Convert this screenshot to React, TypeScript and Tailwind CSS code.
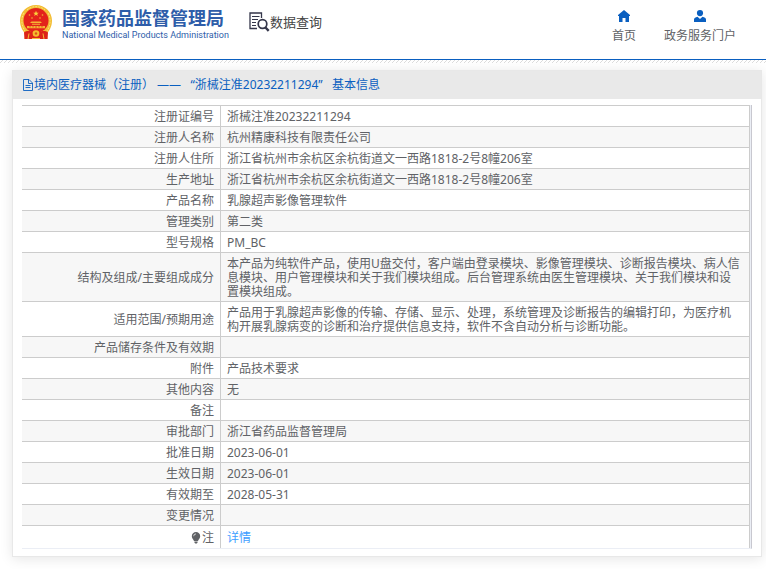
import { FC, ReactNode } from "react";

interface DetailRow {
  label: string;
  value: string;
}

const rows: DetailRow[] = [
  { label: "注册证编号", value: "浙械注准20232211294" },
  { label: "注册人名称", value: "杭州精康科技有限责任公司" },
  { label: "注册人住所", value: "浙江省杭州市余杭区余杭街道文一西路1818-2号8幢206室" },
  { label: "生产地址", value: "浙江省杭州市余杭区余杭街道文一西路1818-2号8幢206室" },
  { label: "产品名称", value: "乳腺超声影像管理软件" },
  { label: "管理类别", value: "第二类" },
  { label: "型号规格", value: "PM_BC" },
  {
    label: "结构及组成/主要组成成分",
    value:
      "本产品为纯软件产品，使用U盘交付，客户端由登录模块、影像管理模块、诊断报告模块、病人信息模块、用户管理模块和关于我们模块组成。后台管理系统由医生管理模块、关于我们模块和设置模块组成。",
  },
  {
    label: "适用范围/预期用途",
    value:
      "产品用于乳腺超声影像的传输、存储、显示、处理，系统管理及诊断报告的编辑打印，为医疗机构开展乳腺病变的诊断和治疗提供信息支持，软件不含自动分析与诊断功能。",
  },
  { label: "产品储存条件及有效期", value: "" },
  { label: "附件", value: "产品技术要求" },
  { label: "其他内容", value: "无" },
  { label: "备注", value: "" },
  { label: "审批部门", value: "浙江省药品监督管理局" },
  { label: "批准日期", value: "2023-06-01" },
  { label: "生效日期", value: "2023-06-01" },
  { label: "有效期至", value: "2028-05-31" },
  { label: "变更情况", value: "" },
];

export default function App() {
  return (
    <div
      lang="zh-CN"
      className="min-h-screen bg-white pb-3 font-['Noto_Sans','Noto_Sans_CJK_SC',sans-serif] text-xs text-[#606266]"
    >
      <SiteHeader />
      <main className="mt-[7px] mr-1 ml-3 border border-[#e8e8e8] bg-white shadow-[0_2px_12px_rgba(0,0,0,0.1)]">
        <h1 className="flex h-7 items-center bg-[#e9e9e9] pl-[9px] text-[#0a5fc0]">
          <DocIcon />
          <span className="whitespace-pre">
            境内医疗器械（注册） ——&nbsp;&nbsp; “浙械注准20232211294”&nbsp;&nbsp; 基本信息
          </span>
        </h1>
        <div className="px-[9px] pt-1.5 pb-[7px]">
          <DetailTable />
        </div>
      </main>
    </div>
  );
}

const SiteHeader = () => {
  return (
    <header>
      <div className="flex h-[59px] items-start justify-between pr-[30px] pl-5">
        <div className="flex items-start gap-5">
          <a href="#" className="flex items-start gap-[10px] pt-[5px] text-[#2e5da9]">
            <Emblem />
            <span className="flex flex-col pt-[3px]">
              <span className="text-lg leading-5 font-bold">国家药品监督管理局</span>
              <span className="font-['Roboto',sans-serif] text-[9px] leading-[14px]">
                National Medical Products Administration
              </span>
            </span>
          </a>
          <a
            href="#"
            className="flex items-center pt-3 text-[13px] leading-5 text-[#444]"
          >
            <SearchDocIcon />
            数据查询
          </a>
        </div>
        <nav className="flex gap-7 pt-2.5">
          <NavLink label="首页">
            <path d="M6 0 0 5v1h1v6h3.5V8h3v4H11V6h1V5z" />
          </NavLink>
          <NavLink label="政务服务门户">
            <circle cx="6" cy="3.1" r="3.1" />
            <path d="M0 12V9.6C0 8 1.5 7.2 3.5 6.8L6 9l2.500-2.200C10.500 7.200 12 8 12 9.600V12z" />
          </NavLink>
        </nav>
      </div>
      <div className="h-px bg-[#0a5fc0]" />
      <Hatching />
    </header>
  );
};

const NavLink: FC<{ label: string; children: ReactNode }> = ({ label, children }) => {
  return (
    <a href="#" className="flex flex-col items-center gap-[5px]">
      <svg width="12" height="12" viewBox="0 0 12 12" className="fill-[#0a5fc0]">
        {children}
      </svg>
      <span className="leading-[18px]">{label}</span>
    </a>
  );
};

const Hatching = () => (
  <svg width="100%" height="3" className="block">
    <pattern id="hatch" width="4" height="4" patternUnits="userSpaceOnUse">
      <path d="M2 0h1v1H2zM1 1h1v1H1zM0 2h1v1H0z" fill="#dcdcdc" />
    </pattern>
    <rect width="100%" height="3" fill="url(#hatch)" />
  </svg>
);

const DetailTable = () => {
  return (
    <div className="border-r border-b border-r-[#c8c8d0] border-b-[#ebeef5] bg-[#ebeef5] pr-px">
      <table className="w-full border-separate border-spacing-0 bg-white leading-[14px]">
        <tbody>
          {rows.map((row) => (
            <tr key={row.label} className="even:bg-[#f7f7f7]">
              <th
                scope="row"
                className="w-[199px] border-t border-r border-[#ccc] px-1.5 pt-1 pb-0.5 text-right font-normal"
              >
                {row.label}
              </th>
              <td className="border-t border-r border-[#ccc] pt-1 pr-2 pb-0.5 pl-1.5 text-left">
                {row.value}
              </td>
            </tr>
          ))}
          <tr>
            <th
              scope="row"
              className="w-[199px] border-t border-r border-[#ccc] px-1.5 pt-[5px] pb-[3px] text-right font-normal"
            >
              <span className="flex items-center justify-end gap-px">
                <BulbIcon />注
              </span>
            </th>
            <td className="border-t border-r border-[#ccc] pt-[5px] pr-2 pb-[3px] pl-1.5 text-left">
              <a href="#" className="text-[#409eff]">
                详情
              </a>
            </td>
          </tr>
        </tbody>
      </table>
    </div>
  );
};

const DocIcon = () => (
  <svg width="12" height="12" viewBox="0 0 12 12" fill="none" stroke="currentColor">
    <path d="M1.500 .5h5.500l3.500 3.500v7.500h-9zM6.500 .5v4h4M3.500 6.500h5M3.500 8.500h5" strokeWidth=".9" />
  </svg>
);

const BulbIcon = () => (
  <svg width="10" height="12" viewBox="0 0 10 12" fill="currentColor">
    <path d="M5 0a4.200 4.200 0 0 0-4.200 4.200c0 2 1.500 3 2.200 4.800h4c.7-1.800 2.200-2.800 2.200-4.800A4.200 4.200 0 0 0 5 0zM3.400 9.600h3.200v.8L5.800 11.400H4.200l-.8-1z" />
    <path d="M2.700 4.200A2.300 2.300 0 0 1 5 1.900" fill="none" stroke="#fff" strokeWidth=".7" />
  </svg>
);

const SearchDocIcon = () => (
  <svg width="21" height="20" viewBox="0 0 21 20" fill="none" stroke="#34364a">
    <path d="M12.500 6V1H1v15.500h7" strokeWidth="1.300" />
    <path d="M3 4.500h7.500M3 7.500h6M3 10.500h4M3 13.500h4" />
    <circle cx="13.500" cy="12" r="4.300" strokeWidth="1.700" fill="#fff" />
    <path d="m16.500 15.500 3.200 3.300" strokeWidth="2.400" />
  </svg>
);

const Emblem = () => (
  <svg width="32" height="35" viewBox="0 0 32 35">
    <path
      d="M16 0C7 0 0 7 0 15.500c0 6.500 3 10.500 5 13L4.500 34h23l-.5-5.500c2-2.500 5-6.500 5-13C32 7 25 0 16 0z"
      fill="#f3bd35"
    />
    <path
      d="M4 8C1 13 1 20 5 26M28 8c3 5 3 12-1 18M7 5c5-4.500 13-4.500 18 0"
      fill="none"
      stroke="#fbe27a"
      strokeWidth="1"
      strokeDasharray="2 1"
    />
    <circle cx="16" cy="15.500" r="12.500" fill="#e3231b" />
    <path
      d="m16 5.800.8 1.900h2l-1.600 1.300.6 2-1.800-1.200-1.800 1.200.6-2-1.600-1.300h2z"
      fill="#fbd23c"
    />
    <g fill="#f5b535">
      <circle cx="9.500" cy="10" r=".8" />
      <circle cx="22.500" cy="10" r=".8" />
      <circle cx="12" cy="13" r=".8" />
      <circle cx="20" cy="13" r=".8" />
      <path d="M11.500 16.500h9l1.500 1.500H10zM12 18.800h8v.9h-8zM7 21h18v2.200H7z" />
    </g>
    <path d="M10 21v1.500M13 21v1.500M16 21v2M19 21v1.500M22 21v1.500" stroke="#d8351c" strokeWidth=".8" />
    <path d="M4 27.500c3-2.500 7-1.500 9 0h6c2-1.500 6-2.500 9 0l-.5 6.500h-23z" fill="#dd2418" />
    <circle cx="16" cy="28.500" r="3.300" fill="#f5bd2d" />
    <circle cx="16" cy="28.500" r="1.200" fill="#dd5418" />
    <path d="M9 28.500 8 34M23 28.500l1 5.500M12 33.500h8" stroke="#f3bd35" fill="none" />
  </svg>
);
